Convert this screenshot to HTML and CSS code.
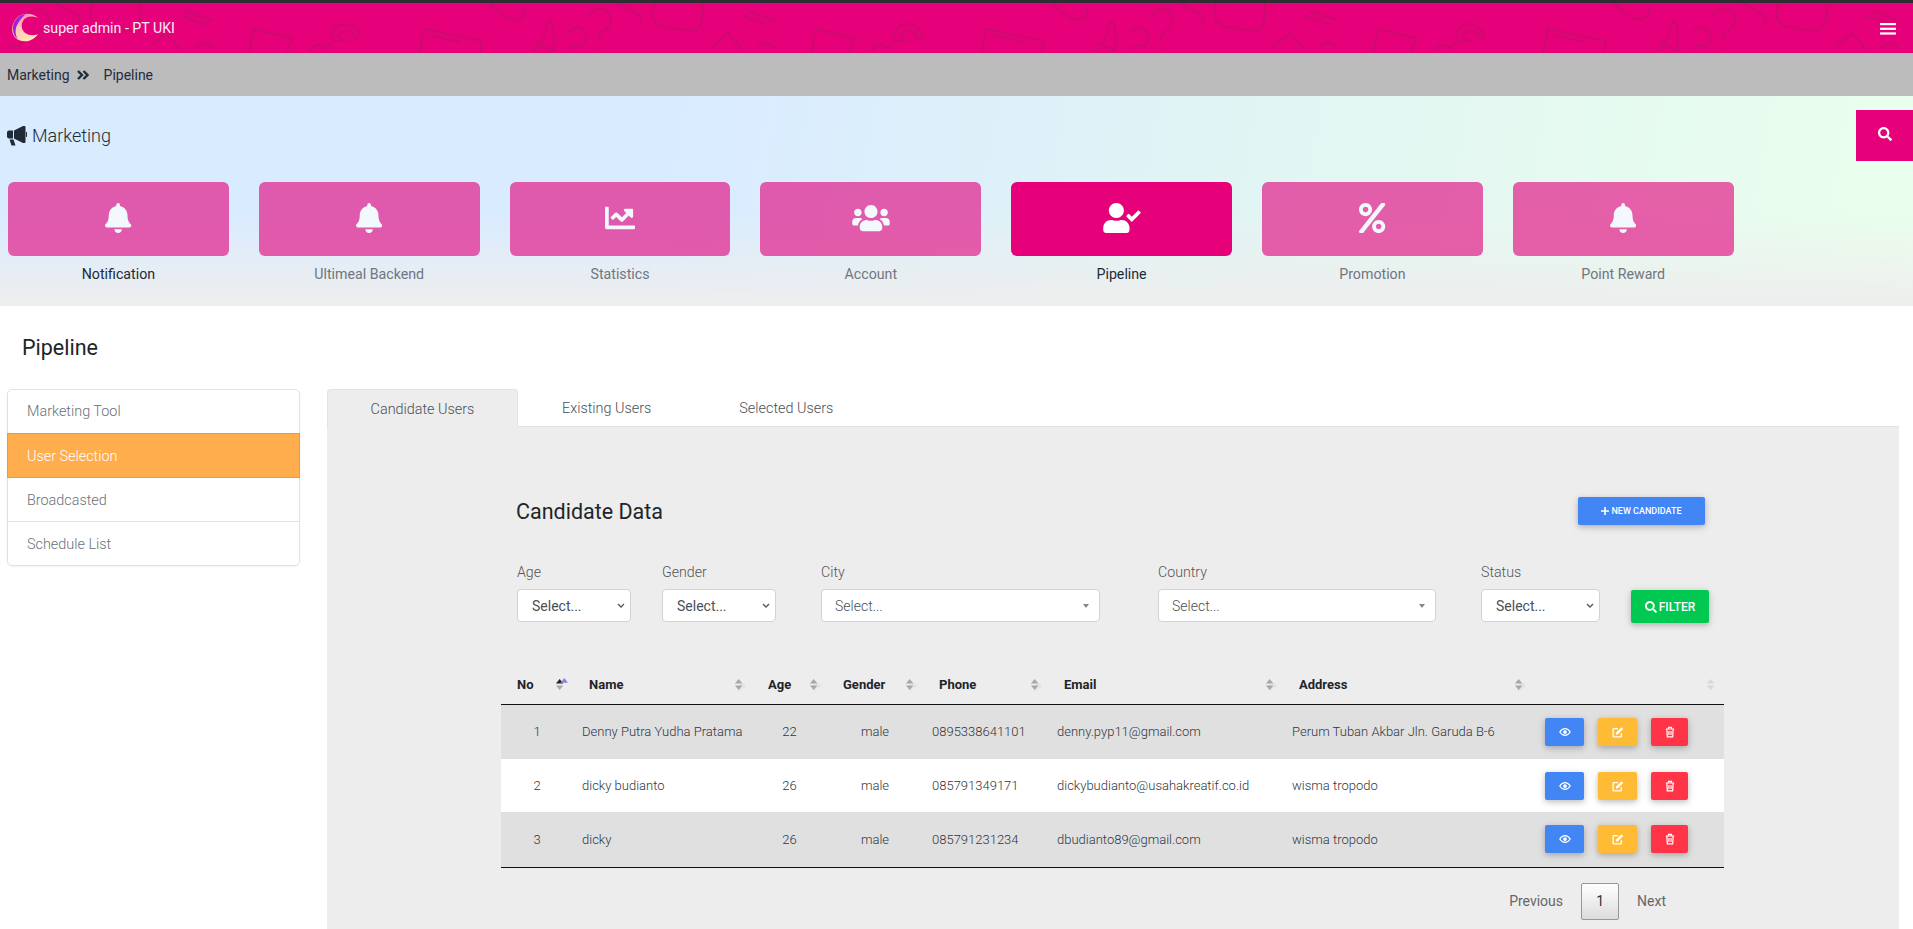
FILE: index.html
```html
<!DOCTYPE html>
<html lang="en">
<head>
  <meta charset="UTF-8">
  <title>Pipeline</title>
  <link rel="stylesheet" href="styles.css">
</head>
<body>
  <header class="topbar">
    <svg class="doodles" width="1913" height="50" viewBox="0 0 1913 50">
      <defs>
        <g id="tile" fill="none" stroke="#cd0b6f" stroke-width="2" stroke-linecap="round" stroke-linejoin="round">
          <path d="M53 -2l24 14q6 5 0 9"/>
          <path d="M92 0q-6 20 10 24l26 4q10 0 12-10l1-18"/>
          <path d="M186 8l26 9M181 13l26 9"/>
          <path d="M332 34q2-14 14-13 12 1 14 13M338 34q4-7 10-6 8 1 8 8M325 46q10-12 22-8"/>
          <path d="M254 26l38 9-5 15M254 26l-5 24"/>
          <path d="M424 26l58 12-2 12M424 26l-5 24M430 32l30 7"/>
          <path d="M490 0q12 14 26 17 12-2 8-12"/>
          <path d="M533 48q12-8 14-26 2-6 5-2 3 8 1 28M536 40l18 8"/>
          <path d="M26 14q8-12 18-6 10 8 0 18l-7 6v4M37 44v3"/>
          <path d="M150 44l16-14 14 16M196 44q8-8 16 0M310 48q6-10 14-4"/>
          <path d="M6 30q8-10 16-2 6 8-2 14M8 46q6-6 12-2"/>
        </g>
      </defs>
      <use href="#tile" x="0"/>
      <use href="#tile" x="562"/>
      <use href="#tile" x="1124"/>
      <use href="#tile" x="1686"/>
    </svg>
    <div class="brand">
      <svg class="logo" viewBox="0 0 28 30">
        <defs>
          <linearGradient id="logoA" x1="0.1" y1="0" x2="0.7" y2="1">
            <stop offset="0" stop-color="#ff4aa8"/>
            <stop offset="0.4" stop-color="#ffc4b4"/>
            <stop offset="1" stop-color="#ffe9b4"/>
          </linearGradient>
        </defs>
        <path d="M27 5C21-1 9-1 4 6-2 14-1 24 7 28c7 3 15 1 20-6-5 2-10 1-13-1-4-3-5-8-3-12 2-5 8-7 16-4z" fill="url(#logoA)"/>
        <path d="M14 1C7 2 1 8 1 16c0 5 2 9 5 11-3-5-3-11 0-16 2-4 5-7 8-10z" fill="#9a24dc"/>
      </svg>
      <span class="brand-name">super admin - PT UKI</span>
    </div>
    <svg class="menu-icon" viewBox="0 0 16 12" fill="#fff"><rect width="16" height="2.2"/><rect y="4.7" width="16" height="2.2"/><rect y="9.4" width="16" height="2.2"/></svg>
  </header>

  <nav class="crumbs">
    <span>Marketing</span>
    <svg class="crumb-sep" viewBox="0 0 12 10" fill="none" stroke="#1f2d3d" stroke-width="2.4"><path d="M1 1l4 4-4 4M6.500 1l4 4-4 4"/></svg>
    <span>Pipeline</span>
  </nav>

  <section class="hero">
    <div class="hero-head">
      <h2 class="hero-title">
        <svg class="horn" viewBox="0 0 20 20" fill="#212b36"><path d="M0 6.500a2 2 0 0 1 2-2h4v8H2a2 2 0 0 1-2-2zM7 4.500l9-4.500h1.500a1 1 0 0 1 1 1v15a1 1 0 0 1-1 1H16l-9-4.500zM19 6a2.500 2.500 0 0 1 0 5zM2.500 13.500H6.500L8.500 19.500H4.500z"/></svg>
        Marketing
      </h2>
      <button class="search-btn">
        <svg viewBox="0 0 512 512" fill="#fff"><path d="M505 442.7L405.3 343c-4.5-4.5-10.6-7-17-7H372c27.6-35.3 44-79.7 44-128C416 93.1 322.9 0 208 0S0 93.1 0 208s93.1 208 208 208c48.3 0 92.7-16.4 128-44v16.3c0 6.4 2.5 12.5 7 17l99.7 99.7c9.4 9.4 24.6 9.4 33.9 0l28.3-28.3c9.4-9.4 9.4-24.6.1-34zM208 336c-70.7 0-128-57.2-128-128 0-70.7 57.2-128 128-128 70.7 0 128 57.2 128 128 0 70.7-57.2 128-128 128z"/></svg>
      </button>
    </div>
    <div class="tiles">
      <div class="tile dark-label">
        <div class="tile-box"><svg class="ic-bell" viewBox="0 0 448 512"><path d="M224 512c35.32 0 63.97-28.65 63.97-64H160.03c0 35.35 28.65 64 63.97 64zm215.39-149.71c-19.32-20.76-55.47-51.99-55.47-154.29 0-77.7-54.48-139.9-127.94-155.16V32c0-17.67-14.32-32-31.98-32s-31.98 14.33-31.98 32v20.84C118.56 68.1 64.08 130.3 64.08 208c0 102.3-36.15 133.53-55.47 154.29-6 6.45-8.66 14.16-8.61 21.71.11 16.4 12.98 32 32.1 32h383.8c19.12 0 32-15.6 32.1-32 .05-7.55-2.61-15.27-8.61-21.71z"/></svg></div>
        <span>Notification</span>
      </div>
      <div class="tile">
        <div class="tile-box"><svg class="ic-bell" viewBox="0 0 448 512"><path d="M224 512c35.32 0 63.97-28.65 63.97-64H160.03c0 35.35 28.65 64 63.97 64zm215.39-149.71c-19.32-20.76-55.47-51.99-55.47-154.29 0-77.7-54.48-139.9-127.94-155.16V32c0-17.67-14.32-32-31.98-32s-31.98 14.33-31.98 32v20.84C118.56 68.1 64.08 130.3 64.08 208c0 102.3-36.15 133.53-55.47 154.29-6 6.45-8.66 14.16-8.61 21.71.11 16.4 12.98 32 32.1 32h383.8c19.12 0 32-15.6 32.1-32 .05-7.55-2.61-15.27-8.61-21.71z"/></svg></div>
        <span>Ultimeal Backend</span>
      </div>
      <div class="tile">
        <div class="tile-box"><svg class="ic-chart" viewBox="0 0 512 512"><path d="M496 384H64V80c0-8.84-7.16-16-16-16H16C7.16 64 0 71.16 0 80v336c0 17.67 14.33 32 32 32h464c8.84 0 16-7.16 16-16v-32c0-8.84-7.16-16-16-16zM464 96H345.94c-21.38 0-32.09 25.85-16.97 40.97l32.4 32.4L288 242.75l-73.37-73.37c-12.5-12.5-32.76-12.5-45.25 0l-68.69 68.69c-6.25 6.25-6.25 16.38 0 22.63l22.62 22.62c6.25 6.25 16.38 6.25 22.63 0L192 237.25l73.37 73.37c12.5 12.5 32.76 12.5 45.25 0l96-96 32.4 32.4c15.12 15.12 40.97 4.41 40.97-16.97V112c.01-8.84-7.15-16-16-16z"/></svg></div>
        <span>Statistics</span>
      </div>
      <div class="tile">
        <div class="tile-box"><svg class="ic-users" viewBox="0 0 640 512"><path d="M96 224c35.3 0 64-28.7 64-64s-28.7-64-64-64-64 28.7-64 64 28.7 64 64 64zm448 0c35.3 0 64-28.7 64-64s-28.7-64-64-64-64 28.7-64 64 28.7 64 64 64zm32 32h-64c-17.6 0-33.5 7.1-45.1 18.6 40.3 22.1 68.9 62 75.1 109.4h66c17.7 0 32-14.3 32-32v-32c0-35.3-28.7-64-64-64zm-256 0c61.9 0 112-50.1 112-112S381.9 32 320 32 208 82.1 208 144s50.1 112 112 112zm76.8 32h-8.3c-20.8 10-43.9 16-68.5 16s-47.6-6-68.5-16h-8.3C179.6 288 128 339.6 128 403.2V432c0 26.5 21.5 48 48 48h288c26.5 0 48-21.5 48-48v-28.8c0-63.6-51.6-115.2-115.2-115.2zm-223.7-13.4C161.5 263.1 145.6 256 128 256H64c-35.3 0-64 28.7-64 64v32c0 17.7 14.3 32 32 32h65.9c6.3-47.4 34.9-87.3 75.2-109.4z"/></svg></div>
        <span>Account</span>
      </div>
      <div class="tile dark-label active">
        <div class="tile-box"><svg class="ic-userc" viewBox="0 0 640 512"><path d="M224 256c70.7 0 128-57.3 128-128S294.7 0 224 0 96 57.3 96 128s57.3 128 128 128zm89.6 32h-16.7c-22.2 10.2-46.9 16-72.9 16s-50.6-5.8-72.9-16h-16.7C60.2 288 0 348.2 0 422.4V464c0 26.5 21.5 48 48 48h352c26.5 0 48-21.5 48-48v-41.6c0-74.2-60.2-134.4-134.4-134.4zm323-128.4l-27.8-28.1c-4.6-4.7-12.1-4.7-16.8-.1l-104.8 104-45.5-45.8c-4.6-4.7-12.1-4.7-16.8-.1l-28.1 27.9c-4.7 4.6-4.7 12.1-.1 16.8l81.7 82.3c4.6 4.7 12.1 4.7 16.8.1l141.3-140.2c4.6-4.7 4.7-12.2.1-16.8z"/></svg></div>
        <span>Pipeline</span>
      </div>
      <div class="tile">
        <div class="tile-box"><svg class="ic-bell" viewBox="0 0 448 512"><path d="M112 224c61.9 0 112-50.1 112-112S173.9 0 112 0 0 50.1 0 112s50.1 112 112 112zm0-160c26.5 0 48 21.5 48 48s-21.5 48-48 48-48-21.5-48-48 21.5-48 48-48zm224 224c-61.9 0-112 50.1-112 112s50.1 112 112 112 112-50.1 112-112-50.1-112-112-112zm0 160c-26.5 0-48-21.5-48-48s21.5-48 48-48 48 21.5 48 48-21.5 48-48 48zM392.3.2l31.6.1c19.4.1 30.9 21.8 20 37.8L77.4 501.6a23.95 23.95 0 0 1-20 10.5l-33.4-.1c-19.5 0-30.9-21.9-19.8-37.9L372.4 10.5C376.9 4 384.3.2 392.3.2z"/></svg></div>
        <span>Promotion</span>
      </div>
      <div class="tile">
        <div class="tile-box"><svg class="ic-bell" viewBox="0 0 448 512"><path d="M224 512c35.32 0 63.97-28.65 63.97-64H160.03c0 35.35 28.65 64 63.97 64zm215.39-149.71c-19.32-20.76-55.47-51.99-55.47-154.29 0-77.7-54.48-139.9-127.94-155.16V32c0-17.67-14.32-32-31.98-32s-31.98 14.33-31.98 32v20.84C118.56 68.1 64.08 130.3 64.08 208c0 102.3-36.15 133.53-55.47 154.29-6 6.45-8.66 14.16-8.61 21.71.11 16.4 12.98 32 32.1 32h383.8c19.12 0 32-15.6 32.1-32 .05-7.55-2.61-15.27-8.61-21.71z"/></svg></div>
        <span>Point Reward</span>
      </div>
    </div>
  </section>

  <main class="content">
    <h3 class="page-title">Pipeline</h3>
    <div class="columns">
      <ul class="side-list">
        <li>Marketing Tool</li>
        <li class="on">User Selection</li>
        <li>Broadcasted</li>
        <li>Schedule List</li>
      </ul>

      <div class="tabs-wrap">
        <div class="tabs">
          <div class="tab on">Candidate Users</div>
          <div class="tab">Existing Users</div>
          <div class="tab">Selected Users</div>
        </div>
        <div class="panel">
          <div class="panel-inner">
            <div class="panel-head">
              <h4 class="panel-title">Candidate Data</h4>
              <button class="btn btn-new">
                <svg viewBox="0 0 10 10" fill="#fff"><path d="M4 0h2v4h4v2H6v4H4V6H0V4h4z"/></svg>
                NEW CANDIDATE
              </button>
            </div>

            <div class="filters">
              <div class="field f-age">
                <label>Age</label>
                <select class="pick"><option>Select...</option></select>
              </div>
              <div class="field f-gender">
                <label>Gender</label>
                <select class="pick"><option>Select...</option></select>
              </div>
              <div class="field f-city">
                <label>City</label>
                <div class="combo">Select...<i class="caret"></i></div>
              </div>
              <div class="field f-country">
                <label>Country</label>
                <div class="combo">Select...<i class="caret"></i></div>
              </div>
              <div class="field f-status">
                <label>Status</label>
                <select class="pick"><option>Select...</option></select>
              </div>
              <button class="btn btn-filter">
                <svg viewBox="0 0 512 512" fill="#fff"><path d="M505 442.7L405.3 343c-4.5-4.5-10.6-7-17-7H372c27.6-35.3 44-79.7 44-128C416 93.1 322.9 0 208 0S0 93.1 0 208s93.1 208 208 208c48.3 0 92.7-16.4 128-44v16.3c0 6.4 2.5 12.5 7 17l99.7 99.7c9.4 9.4 24.6 9.4 33.9 0l28.3-28.3c9.4-9.4 9.4-24.6.1-34zM208 336c-70.7 0-128-57.2-128-128 0-70.7 57.2-128 128-128 70.7 0 128 57.2 128 128 0 70.7-57.2 128-128 128z"/></svg>
                FILTER
              </button>
            </div>

            <table class="grid">
              <colgroup>
                <col class="c-no"><col class="c-name"><col class="c-age"><col class="c-gender"><col class="c-phone"><col class="c-email"><col class="c-addr"><col class="c-act">
              </colgroup>
              <thead>
                <tr>
                  <th><div class="th-in">No<svg class="sort" viewBox="0 0 14 16"><path d="M1 7l4-5 4 5z" fill="#222"/><path d="M1 9l4 5 4-5z" fill="#aaa"/><path d="M6 6l4-5 4 5z" fill="#8a86e0"/></svg></div></th>
                  <th><div class="th-in">Name<svg class="sort" viewBox="0 0 14 16"><use href="#sortmark"/></svg></div></th>
                  <th><div class="th-in">Age<svg class="sort" viewBox="0 0 14 16"><use href="#sortmark"/></svg></div></th>
                  <th><div class="th-in">Gender<svg class="sort" viewBox="0 0 14 16"><use href="#sortmark"/></svg></div></th>
                  <th><div class="th-in">Phone<svg class="sort" viewBox="0 0 14 16"><use href="#sortmark"/></svg></div></th>
                  <th><div class="th-in">Email<svg class="sort" viewBox="0 0 14 16"><use href="#sortmark"/></svg></div></th>
                  <th><div class="th-in">Address<svg class="sort" viewBox="0 0 14 16"><use href="#sortmark"/></svg></div></th>
                  <th><div class="th-in th-end"><svg class="sort" viewBox="0 0 14 16"><path d="M1 7l4-5 4 5zM1 9l4 5 4-5z" fill="#d8d8d8"/></svg></div></th>
                </tr>
              </thead>
              <tbody>
                <tr>
                  <td class="mid">1</td><td>Denny Putra Yudha Pratama</td><td class="mid">22</td><td class="mid">male</td><td>0895338641101</td><td>denny.pyp11@gmail.com</td><td>Perum Tuban Akbar Jln. Garuda B-6</td>
                  <td><div class="acts"><button class="act a-view"><svg viewBox="0 0 16 16" fill="none" stroke="#fff"><use href="#eye"/></svg></button><button class="act a-edit"><svg viewBox="0 0 16 16" fill="none" stroke="#fff"><use href="#pen"/></svg></button><button class="act a-del"><svg viewBox="0 0 16 16" fill="none" stroke="#fff"><use href="#bin"/></svg></button></div></td>
                </tr>
                <tr>
                  <td class="mid">2</td><td>dicky budianto</td><td class="mid">26</td><td class="mid">male</td><td>085791349171</td><td>dickybudianto@usahakreatif.co.id</td><td>wisma tropodo</td>
                  <td><div class="acts"><button class="act a-view"><svg viewBox="0 0 16 16" fill="none" stroke="#fff"><use href="#eye"/></svg></button><button class="act a-edit"><svg viewBox="0 0 16 16" fill="none" stroke="#fff"><use href="#pen"/></svg></button><button class="act a-del"><svg viewBox="0 0 16 16" fill="none" stroke="#fff"><use href="#bin"/></svg></button></div></td>
                </tr>
                <tr>
                  <td class="mid">3</td><td>dicky</td><td class="mid">26</td><td class="mid">male</td><td>085791231234</td><td>dbudianto89@gmail.com</td><td>wisma tropodo</td>
                  <td><div class="acts"><button class="act a-view"><svg viewBox="0 0 16 16" fill="none" stroke="#fff"><use href="#eye"/></svg></button><button class="act a-edit"><svg viewBox="0 0 16 16" fill="none" stroke="#fff"><use href="#pen"/></svg></button><button class="act a-del"><svg viewBox="0 0 16 16" fill="none" stroke="#fff"><use href="#bin"/></svg></button></div></td>
                </tr>
              </tbody>
            </table>

            <div class="pager">
              <span>Previous</span>
              <span class="page-now">1</span>
              <span>Next</span>
            </div>
          </div>
        </div>
      </div>
    </div>
  </main>

  <svg class="sprites" width="0" height="0">
    <defs>
      <g id="sortmark">
        <path d="M5 2l4 5 1-1.2 3 3.2-3 3.8-1-1.2-4 5z" fill="#e4e4e4"/>
        <path d="M1 7l4-5 4 5zM1 9l4 5 4-5z" fill="#a8a8a8"/>
      </g>
      <g id="eye">
        <path d="M1 8c2-3 4.300-4.500 7-4.500S13 5 15 8c-2 3-4.300 4.500-7 4.500S3 11 1 8z" stroke-width="1.600"/>
        <circle cx="8" cy="8" r="2.500" fill="#fff" stroke="none"/>
      </g>
      <g id="pen">
        <path d="M12.500 9.500V13.500a1 1 0 0 1-1 1H2.500a1 1 0 0 1-1-1V4.500a1 1 0 0 1 1-1H8" stroke-width="1.800"/>
        <path d="M5.500 8.500L12.500 1.500l2.500 2.500-7 7-3 .5z" fill="#fff" stroke="none"/>
      </g>
      <g id="bin">
        <path d="M2.500 4h11M6 4V1.800h4V4M3.800 4l.6 10.500h7.200L12.200 4M6.600 6.500v5.500M9.400 6.500v5.500" stroke-width="1.600"/>
      </g>
    </defs>
  </svg>
</body>
</html>
```

FILE: styles.css
```css
* {
  box-sizing: border-box;
}
html, body {
  height: 929px;
  overflow: hidden;
}
body {
  margin: 0;
  background: #fff;
  color: #212529;
  font-family: Roboto, "Liberation Sans", sans-serif;
  font-size: 14px;
  font-weight: 300;
}
.sprites {
  display: block;
}

/* top bar */
.topbar {
  position: relative;
  height: 53px;
  padding: 10px 17px 0 12px;
  display: flex;
  justify-content: space-between;
  background: #e6007a;
  border-top: 3px solid #2d2d33;
}
.doodles {
  position: absolute;
  top: 0;
  left: 0;
}
.brand {
  position: relative;
  display: flex;
  align-items: center;
  height: 29px;
  gap: 4px;
}
.logo {
  width: 27px;
  height: 29px;
}
.brand-name {
  color: #fdeaf4;
  font-size: 14.200px;
  font-weight: 400;
}
.menu-icon {
  position: relative;
  width: 16px;
  height: 12px;
  margin-top: 10px;
}

.crumbs {
  height: 43px;
  padding-left: 7px;
  display: flex;
  align-items: center;
  background: #bcbcbc;
  color: #1f2d3d;
  font-weight: 400;
  font-size: 14px;
}
.crumb-sep {
  width: 12px;
  height: 10px;
  margin: 0 15px 0 7px;
}

/* hero */
.hero {
  height: 210px;
  padding-top: 14px;
  background:
    linear-gradient(to bottom, rgba(238,238,238,0) 55%, #eeeeee 100%),
    linear-gradient(100deg, #d9ebff 35%, #e2f6f3 68%, #eaffec 100%);
}
.hero-head {
  display: flex;
  justify-content: space-between;
  height: 51px;
}
.hero-title {
  margin: 0;
  padding-left: 7px;
  display: flex;
  align-items: center;
  gap: 5px;
  font-size: 18px;
  font-weight: 300;
  color: #212b36;
}
.horn {
  width: 20px;
  height: 20px;
}
.search-btn {
  width: 57px;
  height: 51px;
  border: none;
  padding: 0;
  background: #e6007a;
}
.search-btn svg {
  width: 14px;
  height: 14px;
}
.tiles {
  display: flex;
  gap: 30px;
  margin-top: 21px;
  padding-left: 8px;
}
.tile {
  width: 220.800px;
  text-align: center;
  color: #6f7680;
  font-size: 14.200px;
  font-weight: 400;
}
.tile-box {
  height: 74px;
  margin-bottom: 10px;
  border-radius: 6px;
  background: rgba(226, 0, 122, 0.62);
  display: flex;
  align-items: center;
  justify-content: center;
  padding-bottom: 2px;
}
.tile-box svg {
  fill: #f3f8fd;
  height: 30px;
}
.tile-box .ic-chart {
  width: 30px;
}
.tile-box .ic-users {
  width: 38px;
}
.tile-box .ic-userc {
  width: 38px;
}
.tile.active .tile-box {
  background: #e6007a;
}
.tile.active svg {
  fill: #fff;
}
.dark-label {
  color: #212b36;
}

/* content */
.content {
  padding: 0 14px 0 7px;
}
.page-title {
  margin: 0;
  padding-left: 15px;
  height: 83px;
  line-height: 84px;
  font-size: 21.500px;
  font-weight: 400;
}
.columns {
  display: flex;
  gap: 27px;
  align-items: flex-start;
}
.side-list {
  width: 293px;
  margin: 0;
  padding: 0;
  list-style: none;
  border: 1px solid #dee2e6;
  border-radius: 5px;
  color: #6b7178;
  font-size: 14.400px;
  box-shadow: 0 1px 2px rgba(0,0,0,.05);
}
.side-list li {
  height: 44px;
  line-height: 45px;
  padding-left: 19px;
  border-bottom: 1px solid #dee2e6;
}
.side-list li:first-child {
  line-height: 44px;
}
.side-list li:last-child {
  height: 43px;
  border-bottom: none;
}
.side-list li.on {
  background: #ffad4d;
  color: #fff;
  border: 1px solid #f59a28;
  margin: -1px -1px 0;
  padding-left: 19px;
  height: 45px;
}
.tabs-wrap {
  width: 1572px;
}
.tabs {
  display: flex;
  height: 38px;
  border-bottom: 1px solid #dee2e6;
  color: #4a5056;
  font-size: 14.400px;
}
.tab {
  padding: 0 44px;
  line-height: 40px;
}
.tab.on {
  width: 191px;
  height: 38px;
  padding: 0;
  text-align: center;
  background: #ededed;
  border: 1px solid #e3e3e3;
  border-bottom: none;
  border-radius: 4px 4px 0 0;
}
.panel {
  height: 503px;
  padding-left: 174px;
  background: #ededed;
}
.panel-inner {
  width: 1223px;
}
.panel-head {
  height: 64px;
  padding: 70px 19px 0 15px;
  box-sizing: content-box;
  display: flex;
  justify-content: space-between;
  align-items: flex-start;
}
.panel-title {
  margin: 0;
  font-size: 21.500px;
  font-weight: 400;
  line-height: 30px;
}
.btn {
  border: none;
  color: #fff;
  border-radius: 2px;
  display: flex;
  align-items: center;
  justify-content: center;
  font-family: inherit;
  box-shadow: 0 2px 5px rgba(0,0,0,.16), 0 2px 10px rgba(0,0,0,.12);
}
.btn-new {
  width: 127px;
  height: 28px;
  background: #4285f4;
  font-size: 9px;
  font-weight: 500;
  gap: 2px;
}
.btn-new svg {
  width: 8px;
  height: 8px;
}

/* filters */
.filters {
  display: flex;
  align-items: flex-end;
  padding-left: 16px;
  margin-top: 2px;
  height: 59px;
}
.field label {
  display: block;
  height: 25px;
  color: #555;
  font-size: 14.200px;
}
.f-age { width: 114px; }
.f-gender { width: 114px; margin-left: 31px; }
.f-city { width: 279px; margin-left: 45px; }
.f-country { width: 278px; margin-left: 58px; }
.f-status { width: 119px; margin-left: 45px; }
.pick, .combo {
  display: block;
  width: 100%;
  height: 33px;
  border: 1px solid #ced4da;
  border-radius: 4px;
  background-color: #fff;
  font-family: inherit;
  font-size: 14px;
  font-weight: 400;
  color: #495057;
}
.pick {
  padding: 0 0 0 14px;
  appearance: none;
  background-image: url("data:image/svg+xml,%3Csvg xmlns='http://www.w3.org/2000/svg' viewBox='0 0 8 6'%3E%3Cpath d='M1 1l3 3 3-3' fill='none' stroke='%23555' stroke-width='1.300'/%3E%3C/svg%3E");
  background-repeat: no-repeat;
  background-position: right 5px center;
  background-size: 8px 6px;
}
.combo {
  position: relative;
  padding-left: 13px;
  line-height: 33px;
  font-weight: 300;
}
.caret {
  position: absolute;
  right: 10px;
  top: 14px;
  border: 3px solid transparent;
  border-top: 4px solid #888;
}
.btn-filter {
  width: 78px;
  height: 33px;
  margin-left: 31px;
  margin-bottom: -1px;
  background: #00c851;
  font-size: 12px;
  font-weight: 500;
  gap: 2px;
}
.btn-filter svg {
  width: 12px;
  height: 12px;
}

/* table */
.grid {
  width: 1223px;
  margin-top: 44px;
  table-layout: fixed;
  border-collapse: collapse;
}
.c-no { width: 72px; }
.c-name { width: 179px; }
.c-age { width: 75px; }
.c-gender { width: 96px; }
.c-phone { width: 125px; }
.c-email { width: 235px; }
.c-addr { width: 249px; }
.c-act { width: 192px; }
.grid th {
  height: 38px;
  padding: 0 5px 0 16px;
  text-align: left;
  font-size: 13px;
  font-weight: 700;
  color: #212529;
  border-bottom: 1px solid #111;
}
.th-in {
  display: flex;
  align-items: center;
  justify-content: space-between;
}
.th-end {
  justify-content: flex-end;
}
.sort {
  width: 13px;
  height: 15px;
  flex: none;
}
.grid td {
  padding: 0 0 0 9px;
  font-size: 13px;
  color: #2f3640;
  white-space: nowrap;
}
.grid td.mid {
  text-align: center;
  padding: 0;
}
.grid tbody tr {
  height: 53px;
  background: #fff;
}
.grid tbody tr:nth-child(odd) {
  height: 55px;
  background: #e0e0e0;
}
.grid tbody tr:last-child td {
  border-bottom: 1px solid #111;
}
.grid td:last-child {
  padding-left: 13px;
}
.acts {
  display: flex;
  gap: 14px;
}
.act {
  width: 39px;
  height: 28px;
  padding: 0;
  border: none;
  border-radius: 2px;
  display: flex;
  align-items: center;
  justify-content: center;
  box-shadow: 0 2px 5px rgba(0,0,0,.16), 0 2px 10px rgba(0,0,0,.12);
}
.act svg {
  width: 12px;
  height: 12px;
}
.a-view { background: #4285f4; }
.a-edit { background: #ffbb33; }
.a-del { background: #ff3547; width: 37px; }

.pager {
  display: flex;
  justify-content: flex-end;
  align-items: center;
  gap: 18px;
  margin-top: 15px;
  padding-right: 58px;
  color: #666;
  font-weight: 400;
  font-size: 14px;
}
.page-now {
  width: 38px;
  height: 37px;
  line-height: 35px;
  text-align: center;
  color: #333;
  border: 1px solid #979797;
  border-radius: 2px;
  background: linear-gradient(to bottom, #fff, #dcdcdc);
}
```
